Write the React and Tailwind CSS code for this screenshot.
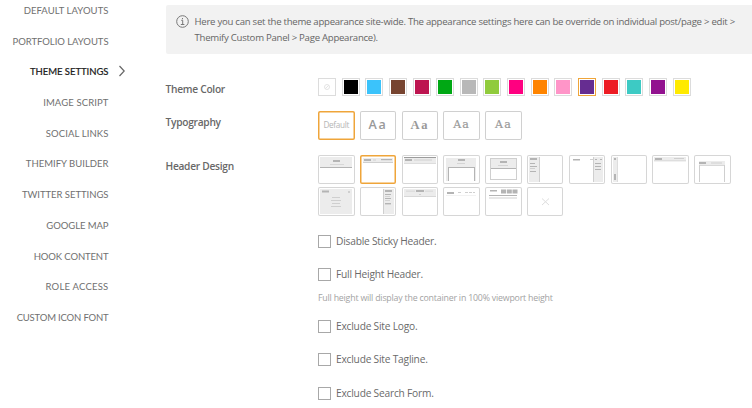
const nav = [
  { label: "DEFAULT LAYOUTS", cls: "tracking-[0.05px]" },
  { label: "PORTFOLIO LAYOUTS", cls: "tracking-[-0.04px]" },
  { label: "THEME SETTINGS", cls: "tracking-[-0.04px]", active: true },
  { label: "IMAGE SCRIPT", cls: "tracking-[0.11px]" },
  { label: "SOCIAL LINKS", cls: "tracking-[0.11px]" },
  { label: "THEMIFY BUILDER", cls: "tracking-[0.01px]" },
  { label: "TWITTER SETTINGS", cls: "tracking-[-0.03px]" },
  { label: "GOOGLE MAP", cls: "tracking-[-0.07px]" },
  { label: "HOOK CONTENT", cls: "tracking-[-0.12px]" },
  { label: "ROLE ACCESS", cls: "tracking-[0.22px]" },
  { label: "CUSTOM ICON FONT", cls: "tracking-[-0.17px]" },
];

const colors = [
  "bg-black", "bg-[#3bc3fb]", "bg-[#774430]", "bg-[#bd1550]", "bg-[#00a814]",
  "bg-[#b8b8b8]", "bg-[#90cb3c]", "bg-[#ff0080]", "bg-[#ff8400]", "bg-[#ff95c8]",
  "bg-[#662d91]", "bg-[#ed1c24]", "bg-[#3dcac4]", "bg-[#92128f]", "bg-[#ffea00]",
];

const G = "#ececec";
const D = "#b4b4b4";
const L = "#cfcfcf";
const R = ({ x, y, w, h, f = D }) => <rect x={x} y={y} width={w} height={h} fill={f} />;

const designs = [
  <><R x={2} y={2} w={32} h={10} f={G} /><R x={15} y={5} w={7} h={2} /><R x={12} y={9} w={14} h={0.7} f={L} /><R x={2} y={12} w={32} h={1} /></>,
  <><R x={3} y={3} w={30} h={5} f={G} /><R x={4} y={4} w={7} h={2} /><R x={13} y={4.5} w={3} h={1} f={L} /><R x={21} y={4} w={11} h={1.2} /><R x={3} y={7} w={30} h={1} f={L} /></>,
  <><R x={2} y={2} w={32} h={6} f={G} /><R x={2} y={2} w={32} h={1} f="#9c9c9c" /><R x={3} y={4} w={7} h={2} /><R x={12} y={4.5} w={18} h={1} f={L} /><R x={2} y={8} w={32} h={0.7} f={L} /></>,
  <><R x={3} y={3} w={30} h={10} f={G} /><R x={3} y={13} w={2} h={13} f={G} /><R x={31} y={13} w={2} h={13} f={G} /><R x={15} y={4} w={7} h={2} /><R x={14} y={8} w={8} h={0.8} f={L} /><rect x="5.5" y="12.5" width="26" height="14" fill="#fff" stroke={D} /><R x={5} y={26} w={27} h={1.2} f="#fff" /></>,
  <><rect x="5.5" y="3.5" width="26" height="21" fill="#fff" stroke={L} /><R x={6} y={4} w={25} h={9} f={G} /><R x={15} y={6} w={7} h={2} /><R x={13} y={10} w={10} h={0.8} f={L} /><R x={6} y={13} w={25} h={1} /></>,
  <><R x={2} y={2} w={10} h={25} f={G} /><R x={3} y={3} w={7} h={2} /><R x={3} y={8} w={5} h={1} /><R x={3} y={11} w={7} h={1} /><R x={3} y={13} w={5} h={1} f={L} /><R x={3} y={16} w={6} h={1} /><R x={12} y={2} w={1} h={25} f={L} /></>,
  <><R x={25} y={2} w={9} h={25} f={G} /><R x={4} y={4} w={7} h={1.5} /><R x={21} y={4} w={3} h={1} f={L} /><R x={26} y={4} w={2} h={1} /><R x={31} y={4} w={2} h={1} /><R x={26} y={8} w={6} h={1} /><R x={26} y={11} w={6} h={1} /><R x={26} y={14} w={6} h={1} /><R x={24} y={2} w={1} h={25} f={L} /></>,
  <><R x={2} y={2} w={4} h={25} f={G} /><R x={3} y={3} w={2} h={2} /><R x={3} y={19} w={2} h={6} /><R x={6} y={2} w={0.7} h={25} f={L} /></>,
  <><R x={2} y={2} w={32} h={4} f={G} /><R x={3} y={3} w={7} h={2} /><R x={22} y={3} w={10} h={1} f={L} /><R x={2} y={5.5} w={32} h={0.8} f={L} /></>,
  <><R x={5} y={6} w={26} h={4} f={G} /><R x={5} y={7} w={7} h={2} /><R x={17} y={7.5} w={11} h={1} f={L} /><R x={5} y={10} w={26} h={0.8} f={L} /><R x={5} y={10} w={1} h={17} f={L} /><R x={30} y={10} w={1} h={17} f={L} /></>,
  <><R x={2} y={2} w={32} h={25} f={G} /><R x={4} y={3.5} w={7} h={2} /><R x={30} y={4} w={2} h={2} f={L} /><R x={14} y={10} w={8} h={1} f={L} /><R x={13} y={13} w={10} h={1} f={L} /><R x={14} y={16} w={8} h={1} f={L} /><R x={13} y={19} w={10} h={1} f={L} /></>,
  <><R x={24} y={2} w={10} h={25} f={G} /><R x={25} y={3} w={7} h={2} /><R x={25} y={7} w={6} h={1} /><R x={25} y={9} w={5} h={0.8} f={L} /><R x={25} y={11} w={6} h={1} /><R x={25} y={13} w={5} h={0.8} f={L} /><R x={25} y={16} w={6} h={1.4} /><R x={23} y={2} w={1} h={25} f={L} /></>,
  <><R x={2} y={2} w={32} h={7} f={G} /><R x={14} y={3} w={8} h={2} /><R x={4} y={3.7} w={9} h={0.8} f={L} /><R x={23} y={3.7} w={8} h={0.8} f={L} /><R x={17} y={7} w={2} h={1} f={L} /><R x={2} y={9} w={32} h={0.8} f={L} /></>,
  <><R x={4} y={5} w={7} h={2} /><R x={15} y={5} w={3} h={1} f={L} /><R x={22} y={5} w={3} h={1} f={L} /><R x={26} y={5} w={3} h={1} f={L} /><R x={30} y={5} w={2} h={1} f={L} /><R x={3} y={8} w={30} h={0.5} f="#e5e5e5" /></>,
  <><R x={5} y={3} w={7} h={1.5} /><R x={16} y={2.5} w={5} h={4} /><R x={21.8} y={2.5} w={5} h={4} /><R x={27.5} y={2.5} w={5} h={4} /><R x={4} y={8} w={28} h={1} /><R x={4} y={10.5} w={28} h={1} f={L} /></>,
  <path d="M15 11.5 L22 18 M22 11.5 L15 18" stroke="#dedede" strokeWidth="1" fill="none" />,
];

function Design({ index }) {
  return (
    <div className={`h-[29px] w-[36.5px] rounded-[2px] ${index === 1 ? "shadow-[inset_0_0_0_1.5px_#efa53a]" : "shadow-[inset_0_0_0_1px_#d6d6d6]"}`}>
      <svg width="36.5" height="29" viewBox="0 0 36.5 29" className="block">{designs[index]}</svg>
    </div>
  );
}

function Check({ label }) {
  return (
    <div className="flex h-[13px] items-center">
      <span className="h-[13px] w-[13px] shrink-0 border border-[#a8a8a8] bg-white" />
      <span className="ml-[5px] whitespace-nowrap text-[10.2px] leading-[13px] tracking-[-0.21px] text-[#6a6a6a]">{label}</span>
    </div>
  );
}

function Label({ children }) {
  return <h3 className="-ml-[0.5px] w-[152.5px] shrink-0 pt-[4px] text-[10.2px] font-semibold leading-[14px] tracking-[-0.27px] text-[#686868]">{children}</h3>;
}

const samples = [
  "font-['Open_Sans',sans-serif] font-semibold text-[12.5px] tracking-[1.8px]",
  "font-['Liberation_Serif',serif] font-bold text-[12.5px] tracking-[1.8px]",
  "font-['DejaVu_Serif',serif] text-[11px] tracking-[1.2px] [-webkit-text-stroke:0.2px_#999]",
  "font-['DejaVu_Serif',serif] text-[11px] tracking-[1.2px] [-webkit-text-stroke:0.2px_#999]",
];

export default function App() {
  return (
    <div className="flex h-[408px] w-[752px] overflow-hidden bg-white font-['Open_Sans',sans-serif] text-[#666]">
      <nav className="flex w-[166px] shrink-0 flex-col pt-[3px] font-['Lato',sans-serif]">
        {nav.map((n) => (
          <div key={n.label} className="flex h-[30.7px] shrink-0 items-start">
            <div className={`w-[108.5px] whitespace-nowrap text-right text-[9.5px] leading-[16px] ${n.active ? "font-medium text-[#222] [-webkit-text-stroke:0.15px_#222]" : "text-[#707070]"} ${n.cls}`}>
              {n.label}
            </div>
            {n.active && (
              <svg width="6" height="12" viewBox="0 0 6 12" className="ml-[10.5px] mt-[0.5px]" fill="none" stroke="#666" strokeWidth="1.2"><path d="M0.5 1 L5.2 6 L0.5 11" /></svg>
            )}
          </div>
        ))}
      </nav>
      <main className="flex min-w-0 flex-1 flex-col pt-[5px]">
        <div className="flex h-[49px] shrink-0 items-start rounded-l-[2px] bg-[#f2f2f2] pl-[10px] pt-[9px]">
          <svg width="13" height="13" viewBox="0 0 13 13" fill="none" stroke="#777" className="mt-[1px] shrink-0">
            <circle cx="6.5" cy="6.5" r="5.8" strokeWidth="1" />
            <path d="M5.2 5.3H6.7V9.5M4.8 9.5H8.4M6.5 3V4.2" />
          </svg>
          <p className="ml-[5.5px] whitespace-nowrap text-[9.6px] leading-[15.5px] tracking-[-0.265px] text-[#666]">
            Here you can set the theme appearance site-wide. The appearance settings here can be override on individual post/page &gt; edit &gt;
            <br />
            Themify Custom Panel &gt; Page Appearance).
          </p>
        </div>
        <div className="mt-[24px] flex h-[33px] shrink-0">
          <Label>Theme Color</Label>
          <div className="flex gap-[5.65px]">
            <span className="flex h-[18px] w-[18px] shrink-0 items-center justify-center border border-[#dcdcdc]">
              <svg width="8" height="8" viewBox="0 0 8 8" fill="none" stroke="#e4e4e4"><circle cx="4" cy="4" r="2.5" /><path d="M2 6L6 2" /></svg>
            </span>
            {colors.map((c, i) => (
              <span key={c} className={`h-[18px] w-[18px] shrink-0 border p-[1px] ${i === 10 ? "border-[#efa53a]" : "border-[#dcdcdc]"}`}>
                <span className={`block h-[14px] w-[14px] ${c}`} />
              </span>
            ))}
          </div>
        </div>
        <div className="flex h-[44px] shrink-0">
          <Label>Typography</Label>
          <div className="flex gap-[5.3px]">
            <span className="flex h-[29px] w-[36.5px] items-center justify-center rounded-[2px] text-[8.2px] tracking-[-0.3px] text-[#b5b5b5] shadow-[inset_0_0_0_1.5px_#efa53a]">Default</span>
            {samples.map((s, i) => (
              <span key={i} className={`flex h-[29px] w-[36.5px] items-center justify-center rounded-[2px] text-[#999] shadow-[inset_0_0_0_1px_#d0d0d0] ${s}`}>Aa</span>
            ))}
          </div>
        </div>
        <div className="flex shrink-0">
          <Label>Header Design</Label>
          <div>
            <div className="grid w-max grid-cols-10 gap-x-[5.3px] gap-y-[3px]">
              {designs.map((_, i) => <Design key={i} index={i} />)}
            </div>
            <div className="mt-[19px]"><Check label="Disable Sticky Header." /></div>
            <div className="mt-[19.5px]"><Check label="Full Height Header." /></div>
            <p className="mt-[11px] whitespace-nowrap text-[8.8px] leading-[13px] tracking-[-0.2px] text-[#a3a3a3]">Full height will display the container in 100% viewport height</p>
            <div className="mt-[15.5px]"><Check label="Exclude Site Logo." /></div>
            <div className="mt-[20px]"><Check label="Exclude Site Tagline." /></div>
            <div className="mt-[20.5px]"><Check label="Exclude Search Form." /></div>
          </div>
        </div>
      </main>
    </div>
  );
}
